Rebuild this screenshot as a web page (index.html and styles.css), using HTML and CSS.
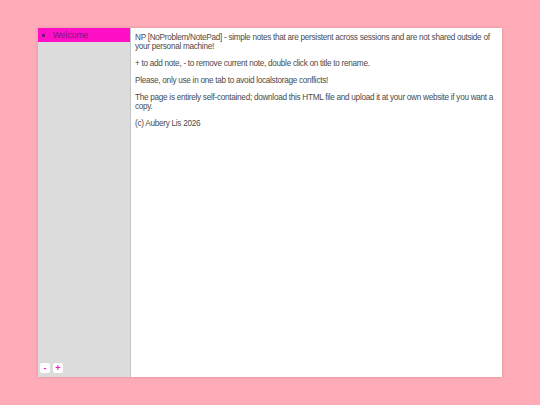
FILE: index.html
```html
<!DOCTYPE html>
<html lang="en">
<head>
    <meta charset="UTF-8">
    <meta name="viewport" content="width=device-width, initial-scale=1.0">
    <title>NP</title>
    <link rel="stylesheet" href="styles.css">
</head>
<body>
    <div class="app">
        <!-- Note list -->
        <div class="sidebar">
            <ul class="notes">
                <li class="note active">Welcome</li>
            </ul>
            <div class="controls">
                <button class="ctl">-</button>
                <button class="ctl">+</button>
            </div>
        </div>

        <!-- Current note -->
        <div class="content">
            <p>NP [NoProblem/NotePad] - simple notes that are persistent across sessions and are not shared outside of your personal machine!</p>
            <p>+ to add note, - to remove current note, double click on title to rename.</p>
            <p>Please, only use in one tab to avoid localstorage conflicts!</p>
            <p>The page is entirely self-contained; download this HTML file and upload it at your own website if you want a copy.</p>
            <p>(c) Aubery Lis 2026</p>
        </div>
    </div>
</body>
</html>
```

FILE: styles.css
```css
body {
    font-family: 'Liberation Sans', Arial, sans-serif;
    background-color: #ffabb8;
    margin: 0;
    padding: 28px 38px;
}
.app {
    display: flex;
    height: 349px;
    background-color: #ffffff;
    box-shadow: 0 0 3px rgba(0, 0, 0, 0.15);
}
.sidebar {
    width: 92px;
    background-color: #dcdcdc;
    border-right: 1px solid #c4c4c4;
    display: flex;
    flex-direction: column;
    justify-content: space-between;
}
.notes {
    margin: 0;
    padding: 0;
    list-style: none;
}
.note {
    font-size: 8.5px;
    height: 14px;
    line-height: 14px;
    padding-left: 15px;
    position: relative;
    color: #7d1478;
}
.note::before {
    content: "";
    position: absolute;
    left: 4px;
    top: 6px;
    width: 3px;
    height: 3px;
    background-color: #7d1478;
}
.note.active {
    background-color: #ff0fc6;
}
.controls {
    display: flex;
    gap: 3px;
    padding: 0 0 4px 2px;
}
.ctl {
    width: 10px;
    height: 10px;
    padding: 0;
    border: none;
    border-radius: 2px;
    background-color: #ffffff;
    color: #ff0fc6;
    font-family: 'Liberation Sans', Arial, sans-serif;
    font-size: 9px;
    font-weight: bold;
    line-height: 10px;
}
.content {
    flex: 1;
    padding: 0 4px;
    color: #4a4a4a;
    font-size: 8.2px;
    letter-spacing: -0.28px;
}
.content p {
    margin: 8px 0;
    line-height: 9px;
}
.content p:first-child {
    margin-top: 5px;
}
```
